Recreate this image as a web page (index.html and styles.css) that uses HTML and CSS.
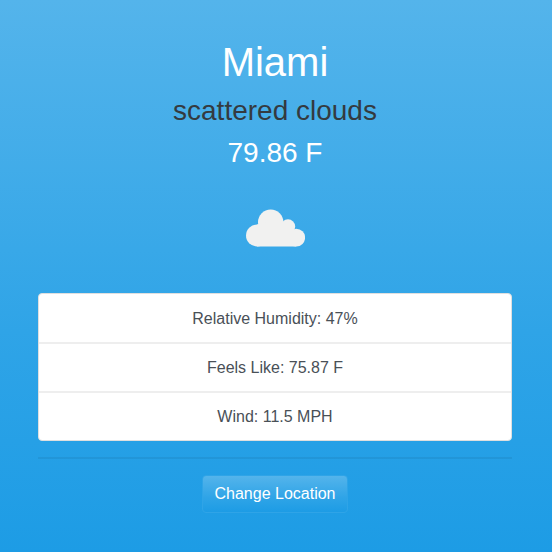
FILE: index.html
```html
<!DOCTYPE html>
<html lang="en">
<head>
<meta charset="utf-8">
<meta name="viewport" content="width=device-width, initial-scale=1">
<title>Weather</title>
<link rel="stylesheet" href="styles.css">
</head>
<body>
<main class="weather">
  <h1 class="city">Miami</h1>
  <h3 class="conditions">scattered clouds</h3>
  <h3 class="temperature">79.86 F</h3>
  <svg class="icon" viewBox="-1 0 60 38" aria-hidden="true">
    <circle cx="11" cy="26.500" r="11"/>
    <circle cx="24.700" cy="13.200" r="12.700"/>
    <circle cx="42" cy="17.500" r="7.200"/>
    <circle cx="50.200" cy="28.600" r="8.900"/>
    <path d="M11 15.500L24 13L42 16L48 20.500L50.200 37.500H11Z"/>
  </svg>
  <ul class="details">
    <li>Relative Humidity: 47%</li>
    <li>Feels Like: 75.87 F</li>
    <li>Wind: 11.5 MPH</li>
  </ul>
  <hr class="divider">
  <button class="button" type="button">Change Location</button>
</main>
</body>
</html>
```
FILE: styles.css
```css
* {
  box-sizing: border-box;
}

html {
  min-height: 100%;
  background: linear-gradient(#54b4eb, #2fa4e7 60%, #1d9ce5);
}

body {
  margin: 0;
  font: 16px/24px "Liberation Sans", Arial, sans-serif;
  color: #495057;
}

.weather {
  padding: 38px 40px 38px 38px;
  text-align: center;
}

h1,
h3 {
  margin: 0 0 8px;
  font-weight: 400;
  color: #fff;
}

.city {
  font-size: 40px;
  line-height: 48px;
}

.conditions,
.temperature {
  font-size: 28px;
  line-height: 34px;
}

.conditions {
  color: #343a40;
}

.icon {
  display: block;
  width: 60px;
  height: 38px;
  margin: 39px auto 46px;
  fill: #f1f1f0;
}

.details {
  margin: 0;
  padding: 0;
  list-style: none;
  background: #fff;
  border: 1px solid #dfdfdf;
  border-radius: 4px;
}

.details li {
  padding: 12px 20px 11px;
}

.details li:first-child {
  padding-top: 13px;
}

.details li + li {
  border-top: 2px solid #eee;
}

.divider {
  margin: 16px 0;
  border: 0;
  border-top: 2px solid rgba(0, 0, 0, 0.06);
}

.button {
  padding: 6px 12px;
  font: inherit;
  color: #fff;
  background: linear-gradient(#54b4eb, #2fa4e7 60%, #1d9ce5) no-repeat;
  border: 1px solid #2fa4e7;
  border-radius: 4px;
}
```
